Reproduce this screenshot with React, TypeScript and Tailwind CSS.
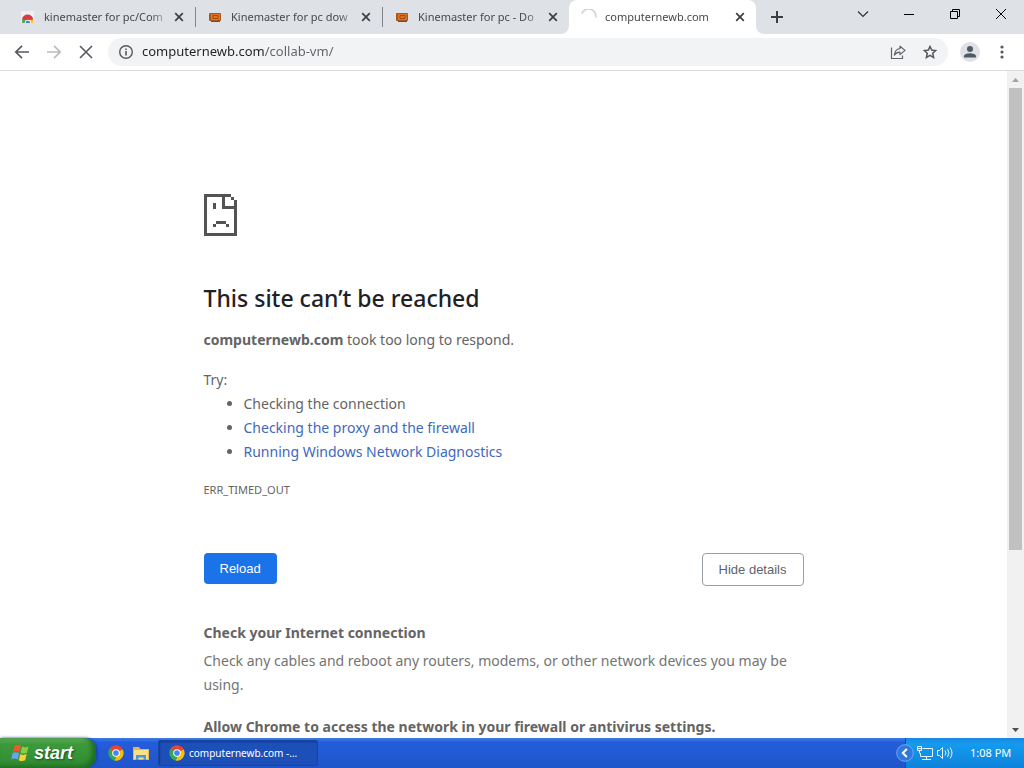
import React from "react";

function ChromeLogo() {
  return (
    <svg viewBox="0 0 48 48" className="size-4 shrink-0" aria-hidden="true">
      <path d="M24 24 L4.1 12.5 A23 23 0 0 1 43.9 12.5 Z" fill="#ea4335" />
      <path d="M24 24 L43.9 12.5 A23 23 0 0 1 24 47 Z" fill="#fbbc04" />
      <path d="M24 24 L24 47 A23 23 0 0 1 4.1 12.5 Z" fill="#34a853" />
      <path d="M24 13 H43.9 L41 10 H24 Z" fill="#ea4335" />
      <path d="M33.5 29.5 L24 47 L20 46 L28 33 Z" fill="#fbbc04" />
      <path d="M14.5 29.5 L4.1 12.5 L6.5 9.5 L18 27 Z" fill="#34a853" />
      <circle cx="24" cy="24" r="11.5" fill="#fff" />
      <circle cx="24" cy="24" r="8.5" fill="#4285f4" />
    </svg>
  );
}

function StoreFavicon() {
  return (
    <svg viewBox="0 0 16 16" className="size-4 shrink-0" aria-hidden="true">
      <path d="M1 2h13v12H1z" fill="#eef0f2" />
      <path d="M2 14v-2.500a5.500 5.500 0 0 1 11 0V14z" fill="#5aa55c" />
      <path d="M8 10.500h5.500V14H8z" fill="#f3c63a" />
      <path d="M2.200 10.500a5.400 5 0 0 1 10.800 0l-5 .5z" fill="#d93a44" />
      <path d="M4.800 14a3 3.200 0 0 1 6 0z" fill="#fff" />
      <path d="M5.500 14a2.300 2.500 0 0 1 4.600 0z" fill="#3f7fe0" />
    </svg>
  );
}

function MonitorFavicon() {
  return (
    <svg viewBox="0 0 16 16" className="size-4 shrink-0" aria-hidden="true">
      <rect x="2" y="4" width="12" height="8" rx="1" fill="#a9561f" />
      <rect x="4" y="5" width="9" height="6" fill="#df7420" />
      <path d="M6 6.500h5v3H6z" fill="none" stroke="#a24a17" />
      <rect x="4" y="12" width="9" height="1" fill="#7a4a2a" />
    </svg>
  );
}

function Spinner() {
  return (
    <svg viewBox="0 0 16 16" className="size-4 shrink-0" aria-hidden="true">
      <path d="M.8 4.600 A7.300 7.300 0 0 1 14.800 8.500" fill="none" stroke="#cfd1df" strokeWidth="1.600" />
    </svg>
  );
}

function Cross() {
  return (
    <svg viewBox="0 0 16 16" className="size-4" aria-hidden="true">
      <path d="M4.2 4.2l7.6 7.6M11.8 4.2l-7.6 7.6" stroke="#3c4043" strokeWidth="1.700" />
    </svg>
  );
}

function Flare({ side }: { side: "left" | "right" }) {
  return (
    <svg
      viewBox="0 0 8 8"
      className={side === "left" ? "absolute bottom-0 right-full size-2" : "absolute bottom-0 left-full size-2 -scale-x-100"}
      aria-hidden="true"
    >
      <path d="M8 0v8H0a8 8 0 0 0 8-8z" fill="#fff" />
    </svg>
  );
}

type TabInfo = { title: string; icon: React.ReactNode; active?: boolean; divider?: boolean };

const tabs: TabInfo[] = [
  { title: "kinemaster for pc/Com", icon: <StoreFavicon />, divider: true },
  { title: "Kinemaster for pc dow", icon: <MonitorFavicon />, divider: true },
  { title: "Kinemaster for pc - Do", icon: <MonitorFavicon /> },
  { title: "computernewb.com", icon: <Spinner />, active: true },
];

function Tab({ title, icon, active, divider }: TabInfo) {
  return (
    <div
      className={
        active
          ? "relative flex h-full min-w-0 max-w-[187px] flex-1 items-center rounded-t-lg bg-white pr-2 pl-3"
          : "relative flex h-full min-w-0 max-w-[187px] flex-1 items-center pr-2 pl-3"
      }
    >
      {active && <Flare side="left" />}
      {active && <Flare side="right" />}
      {icon}
      <span className="ml-2 min-w-0 flex-1 overflow-hidden whitespace-nowrap text-[11px] text-[#45494d] [mask-image:linear-gradient(to_right,black_calc(100%-20px),transparent)]">
        {title}
      </span>
      <button type="button" aria-label={"Close " + title} className="shrink-0">
        <Cross />
      </button>
      {divider && <span className="absolute -right-px h-5 w-px bg-[#80868b]" />}
    </div>
  );
}

function TabStrip() {
  return (
    <header className="flex h-[34px] shrink-0 bg-[#dee1e6]">
      <div className="flex min-w-0 flex-1 items-center pl-2">
        {tabs.map((tab) => (
          <Tab key={tab.title} {...tab} />
        ))}
        <button type="button" aria-label="New tab" className="ml-3 shrink-0">
          <svg viewBox="0 0 18 18" className="size-[18px]" aria-hidden="true">
            <path d="M9 3v12M3 9h12" stroke="#3c4043" strokeWidth="2" />
          </svg>
        </button>
      </div>
      <div className="flex h-7 shrink-0">
        <button type="button" aria-label="Search tabs" className="flex w-[46px] items-center justify-center">
          <svg viewBox="0 0 12 12" className="size-3" aria-hidden="true">
            <path d="M1 3.500l5 5 5-5" fill="none" stroke="#303236" strokeWidth="1.200" />
          </svg>
        </button>
        <button type="button" aria-label="Minimize" className="flex w-[46px] items-center justify-center">
          <svg viewBox="0 0 10 10" className="size-[10px]" aria-hidden="true">
            <path d="M0 5.500h10" stroke="#000" />
          </svg>
        </button>
        <button type="button" aria-label="Restore" className="flex w-[46px] items-center justify-center">
          <svg viewBox="0 0 10 10" className="size-[10px]" aria-hidden="true">
            <path d="M.5 2.500h7v7h-7zM2.500 2.500v-2h7v7h-2" fill="none" stroke="#000" />
          </svg>
        </button>
        <button type="button" aria-label="Close window" className="flex w-[46px] items-center justify-center">
          <svg viewBox="0 0 10 10" className="size-[10px]" aria-hidden="true">
            <path d="M0 0l10 10M10 0L0 10" stroke="#000" />
          </svg>
        </button>
      </div>
    </header>
  );
}

function Toolbar() {
  return (
    <div className="flex h-[37px] shrink-0 items-center border-b border-[#d9dbde] bg-white px-3">
      <div className="flex shrink-0 gap-3">
        <button type="button" aria-label="Back">
          <svg viewBox="0 0 20 20" className="size-5" fill="none" stroke="#55595e" strokeWidth="1.700" aria-hidden="true">
            <path d="M17 10H4M10 3.800L3.800 10l6.200 6.200" />
          </svg>
        </button>
        <button type="button" aria-label="Forward" disabled>
          <svg viewBox="0 0 20 20" className="size-5" fill="none" stroke="#b9bbbe" strokeWidth="1.700" aria-hidden="true">
            <path d="M3 10h13M10 3.800l6.200 6.200-6.200 6.200" />
          </svg>
        </button>
        <button type="button" aria-label="Stop loading">
          <svg viewBox="0 0 20 20" className="size-5" fill="none" stroke="#55595e" strokeWidth="1.600" aria-hidden="true">
            <path d="M4 4l12 12M16 4L4 16" />
          </svg>
        </button>
      </div>
      <div className="ml-3 flex h-7 min-w-0 flex-1 items-center rounded-full bg-[#f1f3f4] px-2.5">
        <button type="button" aria-label="View site information" className="shrink-0">
          <svg viewBox="0 0 16 16" className="size-4" aria-hidden="true">
            <circle cx="8" cy="8" r="6.300" fill="none" stroke="#55595e" strokeWidth="1.400" />
            <path d="M8 7v4.500M8 4.400v1.600" stroke="#55595e" strokeWidth="1.600" />
          </svg>
        </button>
        <input
          type="text"
          aria-label="Address and search bar"
          defaultValue="computernewb.com/collab-vm/"
          className="ml-2 min-w-0 flex-1 bg-linear-to-r from-[#202124] from-[123px] to-[#5f6368] to-[123px] bg-clip-text text-[13px] text-transparent caret-black outline-none"
        />
        <button type="button" aria-label="Share" className="shrink-0">
          <svg viewBox="0 0 16 16" className="size-4" fill="none" stroke="#5f6368" strokeWidth="1.200" aria-hidden="true">
            <path d="M1.500 3.500v11h11v-3" />
            <path d="M10 2.200l5 4.200-5 4.200V8.200c-2.600 0-4.200.8-5.600 2.900.3-3.500 2.300-6.100 5.600-6.600z" strokeLinejoin="round" />
          </svg>
        </button>
        <button type="button" aria-label="Bookmark this tab" className="ml-4 shrink-0">
          <svg viewBox="0 0 24 24" className="size-4" fill="#55595e" aria-hidden="true">
            <path d="M23 9l-7.600-.65L12 1.200 8.600 8.350 1 9l5.700 5.250L5 22.500l7-4.200 7 4.200-1.700-8.250zM12 15.600l-3.800 2.300 1-4.300-3.300-2.900 4.400-.4L12 6.200l1.700 4.100 4.400.4-3.300 2.900 1 4.300z" />
          </svg>
        </button>
      </div>
      <button type="button" aria-label="Profile" className="ml-3 shrink-0">
        <svg viewBox="0 0 20 20" className="size-5" aria-hidden="true">
          <circle cx="10" cy="10" r="10" fill="#dee1e6" />
          <circle cx="10" cy="7" r="3" fill="#4f5a68" />
          <path d="M4 15.500v-1.300C4 12 8 11.200 10 11.200s6 .8 6 3v1.300z" fill="#4f5a68" />
        </svg>
      </button>
      <button type="button" aria-label="Chrome menu" className="ml-3 shrink-0">
        <svg viewBox="0 0 20 20" className="size-5" fill="#55595e" aria-hidden="true">
          <circle cx="10" cy="5" r="1.600" />
          <circle cx="10" cy="10" r="1.600" />
          <circle cx="10" cy="15" r="1.600" />
        </svg>
      </button>
    </div>
  );
}

function SadPage() {
  return (
    <svg viewBox="0 0 33 42" className="h-[42px] w-[33px]" fill="#535353" shapeRendering="crispEdges" aria-hidden="true">
      <path d="M0 0h27v3H3v36h27V15H18V3h3v9h9V6h3v36H0z" />
      <path d="M27 3h3v3h-3zM9 9h3v6H9zM12 27h10v3H12zM9 30h3v3H9zM22 30h3v3h-3z" />
    </svg>
  );
}

function ErrorPage() {
  return (
    <main className="min-w-0 flex-1 overflow-hidden bg-white px-6 pt-[123px] text-sm leading-6 text-[#646464]">
      <div className="mx-auto max-w-[600px]">
        <SadPage />
        <h1 className="mt-[46px] text-[23px] leading-8 font-medium text-[#202124]">This site can’t be reached</h1>
        <p className="mt-3.5">
          <strong className="font-bold">computernewb.com</strong> took too long to respond.
        </p>
        <p className="mt-4">Try:</p>
        <ul className="list-disc pl-10">
          <li>Checking the connection</li>
          <li>
            <a href="#proxy" className="text-[#3f68bd]">Checking the proxy and the firewall</a>
          </li>
          <li>
            <a href="#diagnostics" className="text-[#3f68bd]">Running Windows Network Diagnostics</a>
          </li>
        </ul>
        <p className="mt-3.5 text-[11px] leading-6">ERR_TIMED_OUT</p>
        <div className="mt-[51px] flex items-start justify-between font-['Liberation_Sans',Arial,sans-serif] text-[13px]">
          <button type="button" className="h-[31px] rounded bg-[#1a73e8] px-4 font-medium text-white">
            Reload
          </button>
          <button type="button" className="h-[33px] rounded border border-[#9aa0a6] px-4 text-[#5f6368]">
            Hide details
          </button>
        </div>
        <h2 className="mt-[35px] font-bold">Check your Internet connection</h2>
        <p className="mt-1 text-[#747474]">
          Check any cables and reboot any routers, modems, or other network devices you may be using.
        </p>
        <h2 className="mt-[18px] font-bold">Allow Chrome to access the network in your firewall or antivirus settings.</h2>
      </div>
    </main>
  );
}

function ScrollBar() {
  return (
    <div className="flex w-[17px] shrink-0 flex-col bg-[#f1f1f1]">
      <button type="button" aria-label="Scroll up" className="flex h-[17px] shrink-0 items-center justify-center">
        <svg viewBox="0 0 7 4" className="h-1 w-[7px]" aria-hidden="true">
          <path d="M0 4l3.500-4L7 4z" fill="#a3a3a3" />
        </svg>
      </button>
      <div className="min-h-0 flex-1 px-0.5">
        <div className="h-[73%] bg-[#c1c1c1]" />
      </div>
      <button type="button" aria-label="Scroll down" className="flex h-[17px] shrink-0 items-center justify-center">
        <svg viewBox="0 0 7 4" className="h-1 w-[7px]" aria-hidden="true">
          <path d="M0 0l3.500 4L7 0z" fill="#505050" />
        </svg>
      </button>
    </div>
  );
}

function Taskbar() {
  return (
    <footer className="flex h-[30px] shrink-0 items-stretch bg-linear-to-b from-[#3f7be6] via-[#245ddb] via-15% to-[#1f55cb] text-[11px] text-white">
      <button
        type="button"
        className="flex w-24 items-center gap-1 rounded-r-xl bg-linear-to-b from-[#5eac56] via-[#3c9a3c] via-20% to-[#2f8a30] pl-2.5 shadow-[inset_-4px_-2px_5px_#1d6b22,1px_0_3px_#123f9c]"
      >
        <svg viewBox="0 0 18 18" className="size-5" aria-hidden="true">
          <path d="M4 2.500C6 1.300 8 1.500 9.800 2.600L8.500 8.200C6.700 7.100 4.600 7 2.700 8z" fill="#ee5a2c" />
          <path d="M10.800 3.200c1.800 1 3.800 1 5.800 0L15.300 8.800c-2 1-4 .9-5.800-.1z" fill="#8ecb45" />
          <path d="M2.400 9.100c1.900-1 4-.9 5.800.2L6.900 14.900C5.100 13.800 3 13.700 1.100 14.700z" fill="#6ba2f4" />
          <path d="M9.200 9.900c1.800 1 3.800 1.100 5.800.1l-1.300 5.600c-2 1-4 .9-5.800-.1z" fill="#f9cf3a" />
        </svg>
        <span className="text-lg leading-6 font-bold italic font-['Liberation_Sans',Arial,sans-serif] [text-shadow:1px_1px_2px_#1b4d1d]">start</span>
      </button>
      <div className="flex items-center gap-2 pl-3">
        <button type="button" aria-label="Google Chrome">
          <ChromeLogo />
        </button>
        <button type="button" aria-label="File Explorer">
          <svg viewBox="0 0 18 16" className="h-4 w-[18px]" aria-hidden="true">
            <path d="M1 2h6l1.500 2H17v11H1z" fill="#e8b844" />
            <path d="M2 5h14v9H2z" fill="#fbe08a" />
            <path d="M4 15v-5h10v5h-2.500v-2.500h-5V15z" fill="#4a9ad8" />
          </svg>
        </button>
      </div>
      <button
        type="button"
        className="ml-2 flex h-[26px] w-40 items-center gap-1 self-center rounded-xs border border-[#1746a0] bg-[#1d4fb8] pl-2.5 shadow-[inset_1px_1px_2px_#123b8f]"
      >
        <ChromeLogo />
        <span className="whitespace-nowrap text-[10px]">computernewb.com -...</span>
      </button>
      <div className="relative ml-auto flex w-[119px] items-center border-l border-[#0d4fae] bg-linear-to-b from-[#1a88e2] via-[#149bee] via-20% to-[#0f83dc] pl-2.5">
        <button type="button" aria-label="Show hidden icons" className="absolute -left-2.5">
          <svg viewBox="0 0 18 18" className="size-[18px]" aria-hidden="true">
            <circle cx="9" cy="9" r="8.300" fill="#2f78dd" stroke="#6fa9ee" />
            <path d="M10.800 5L6.800 9l4 4" fill="none" stroke="#fff" strokeWidth="2" />
          </svg>
        </button>
        <svg viewBox="0 0 18 16" className="h-4 w-[18px]" fill="none" stroke="#e6f4ff" aria-hidden="true">
          <path d="M6.500 3.500h10v8H4.500V8M10.500 11.500v3M6 14.500h9M1.500 1.500h4v4h-4zM3.500 5.500v3M2 3.500h3" />
        </svg>
        <svg viewBox="0 0 18 16" className="ml-0.5 h-4 w-[18px]" fill="none" stroke="#e6f4ff" aria-hidden="true">
          <path d="M1.500 5.500h2l3-3v11l-3-3h-2zM9 5.500q2 2.500 0 5M11.500 4q3 4 0 8M14 2.500q4 5.500 0 11" />
        </svg>
        <time className="ml-4 whitespace-nowrap">1:08 PM</time>
      </div>
    </footer>
  );
}

export default function App() {
  return (
    <div className="flex h-screen flex-col overflow-hidden font-['Noto_Sans','Open_Sans',sans-serif]">
      <TabStrip />
      <Toolbar />
      <div className="flex min-h-0 flex-1">
        <ErrorPage />
        <ScrollBar />
      </div>
      <Taskbar />
    </div>
  );
}
